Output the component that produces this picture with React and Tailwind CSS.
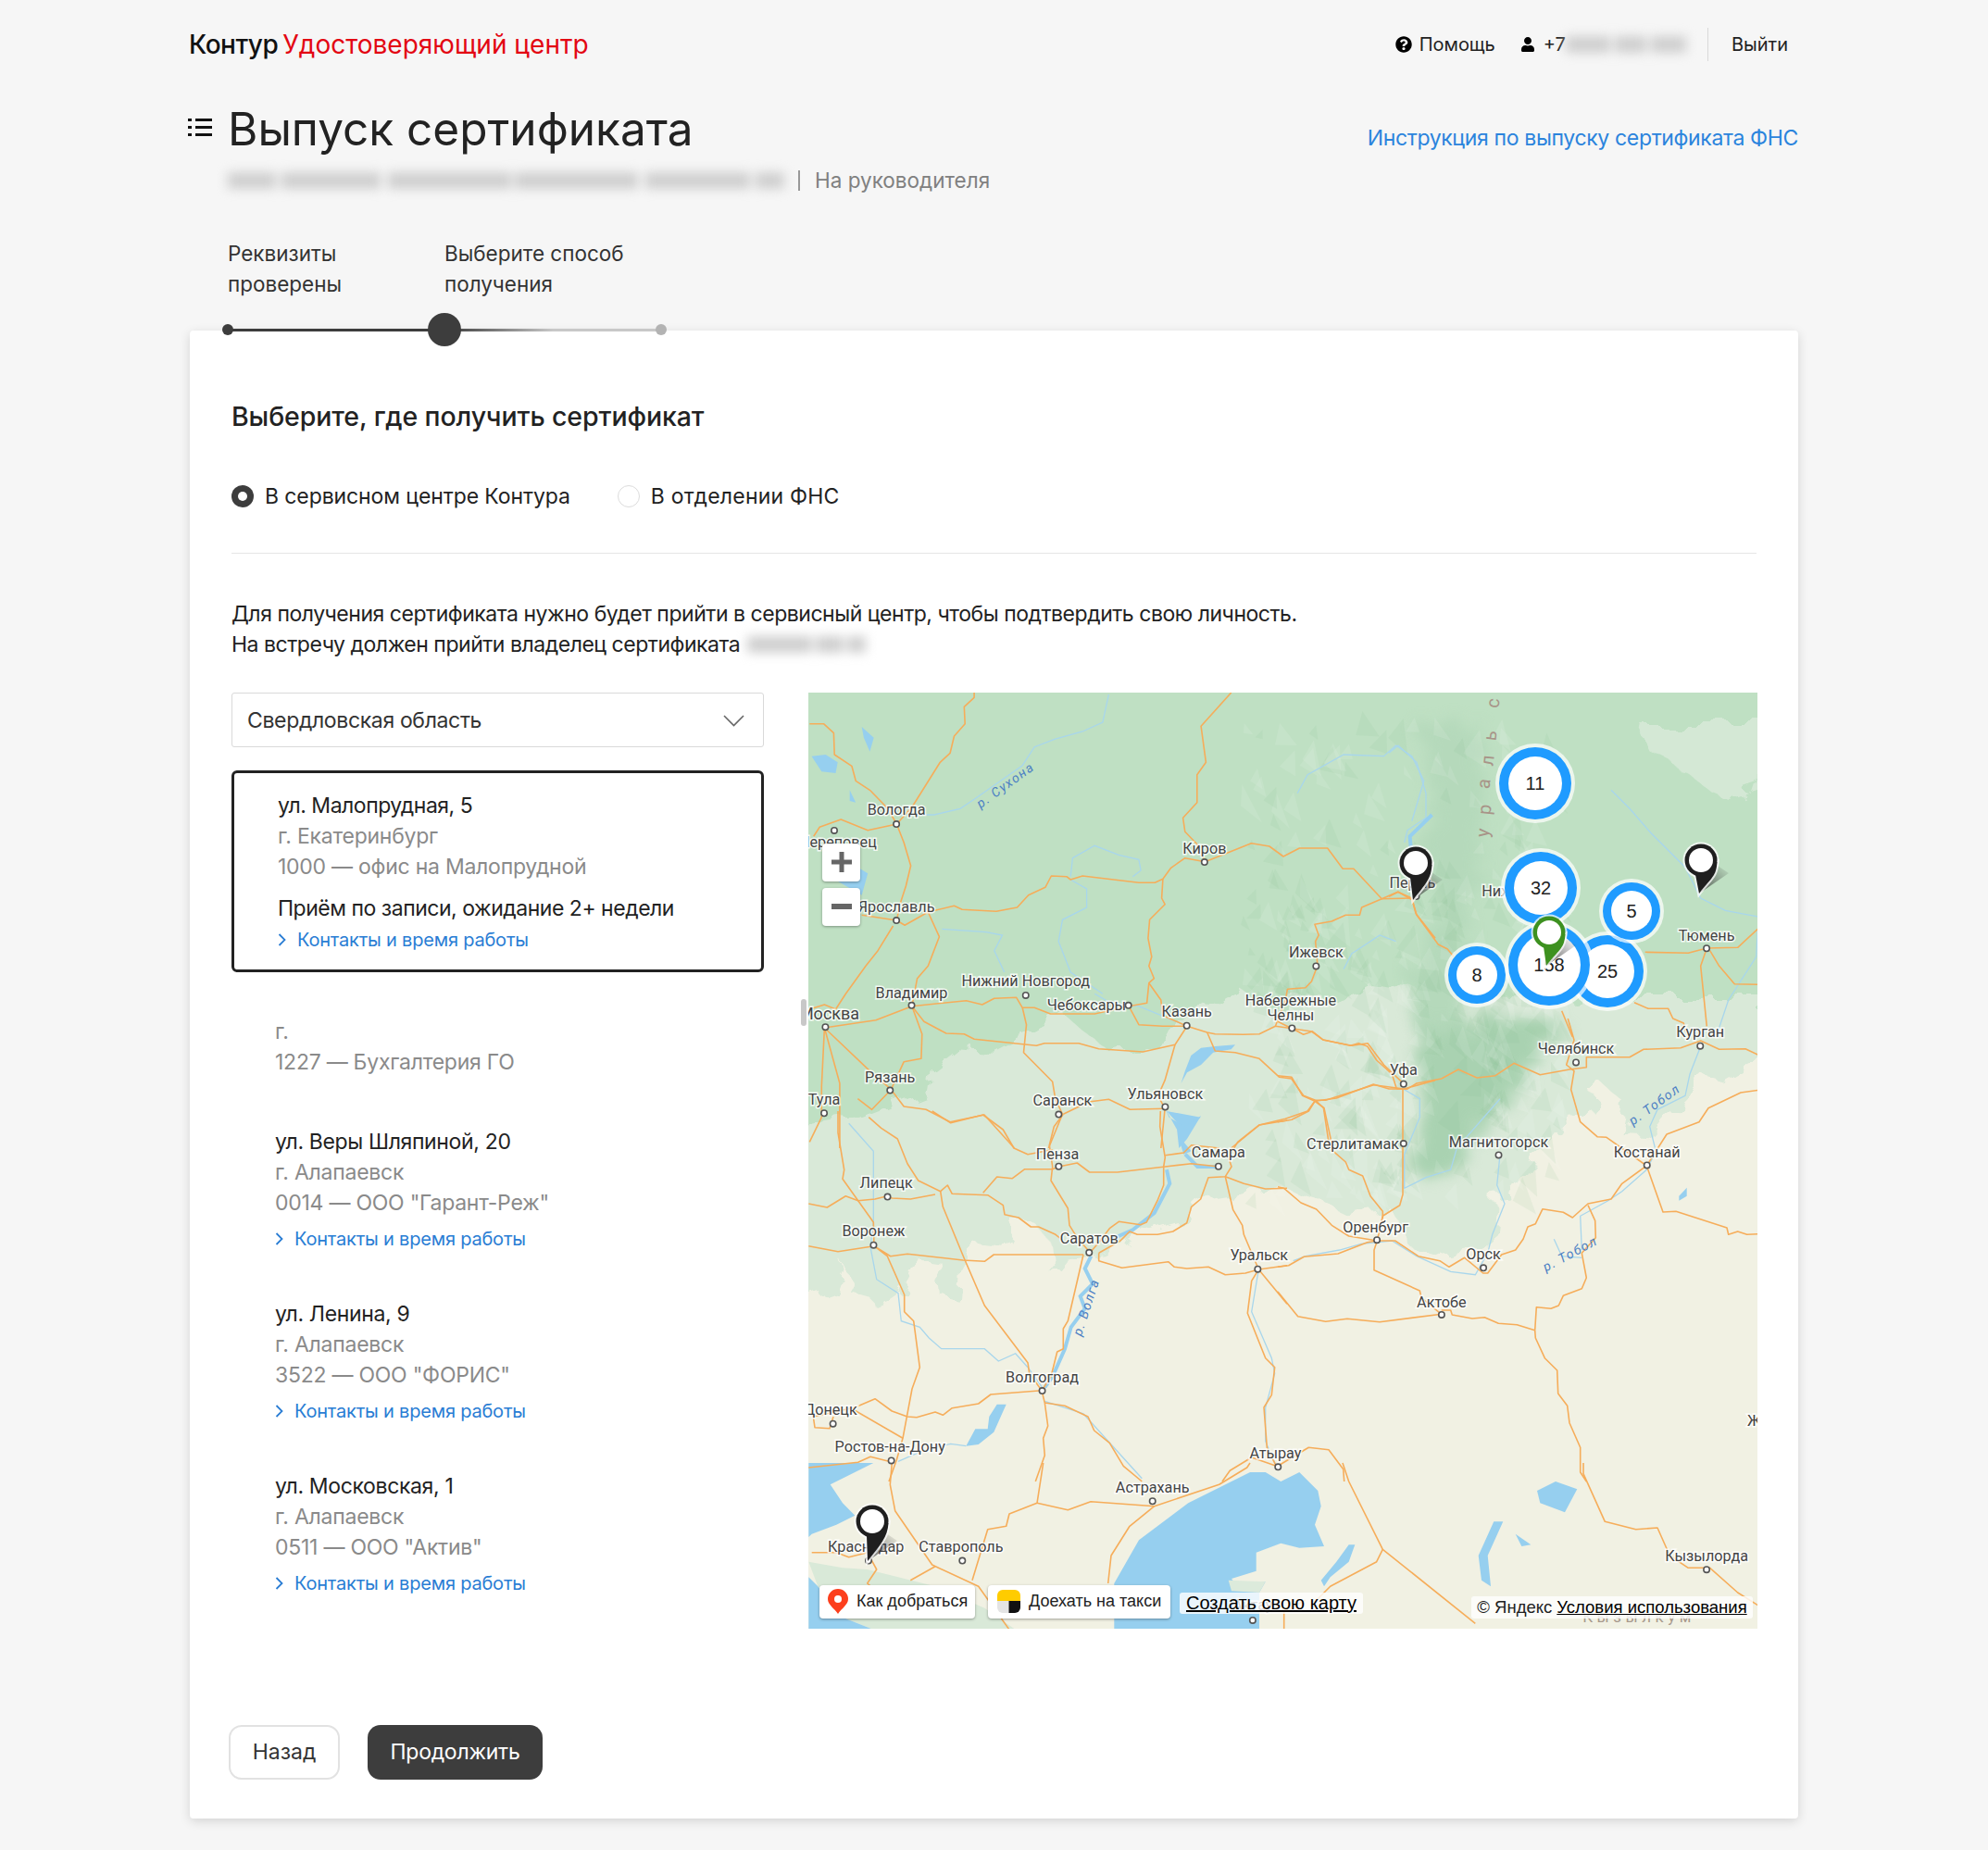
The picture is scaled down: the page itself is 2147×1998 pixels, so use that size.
import React from 'react';
import { FaQuestionCircle, FaUser } from 'react-icons/fa';

// zoom crops of the map -> page pixel coordinates
const z4 = (p) => p.map(([x, y]) => [870 + x / 2.306, 740 + y / 3]);
const z5 = (p) => p.map(([x, y]) => [1500 + x / 3, 780 + y / 3]);
const z6 = (p) => p.map(([x, y]) => [870 + x / 1.5, 1580 + y / 3]);
const z8 = (p) => p.map(([x, y]) => [870 + x / 3, 1200 + y / 3]);
const z9 = (p) => p.map(([x, y]) => [1380 + x / 3, 1100 + y / 3]);
const pts = (p) => p.map(([x, y]) => `${x.toFixed(1)},${y.toFixed(1)}`).join(' ');

const ROADS = [
  ...[
    [[10,125],[45,125],[70,155],[72,225],[115,262],[125,310],[160,340],[205,400],[227,450],[245,510],[262,585],[250,650],[235,710],[227,762]],
    [[227,450],[265,395],[335,250],[360,220],[370,165],[397,125],[395,70],[420,40],[420,24]],
    [[20,490],[35,460],[88,435],[155,470],[227,450]],
    [[140,745],[227,762],[247,778],[305,735],[370,715],[390,727],[475,733],[527,720],[555,680],[597,655],[612,618],[650,620],[660,630],[690,618],[830,640],[870,640],[890,628],[910,592],[945,560],[995,572],[1110,512],[1155,522],[1190,555],[1230,528],[1300,528],[1338,595],[1365,595],[1435,692],[1475,670],[1510,690]],
    [[1060,24],[985,133],[997,250],[975,290],[975,380],[940,430],[945,475],[975,515],[995,572]],
    [[890,628],[887,690],[895,710],[857,760],[853,820],[862,880],[855,910],[868,950],[855,965],[850,1030],[805,1040]],
    [[855,965],[885,1020],[890,1070],[950,1105]],
    [[10,1050],[47,1035],[75,1050]],
    [[47,1110],[175,1085],[265,1040],[400,1022],[440,1035],[470,1015],[525,1012],[540,1045],[570,1045],[610,1065],[720,1065],[805,1040],[830,1100],[890,1105],[950,1105],[1000,1125],[1020,1130],[1090,1132],[1130,1130],[1170,1105],[1212,1112],[1240,1132],[1262,1122],[1290,1150],[1360,1168],[1400,1160],[1440,1230],[1490,1292]],
    [[265,1040],[295,1090],[350,1128],[395,1130],[420,1147],[575,1168],[595,1160],[680,1160],[730,1178],[840,1188],[920,1165],[950,1105]],
    [[218,780],[180,860],[150,910],[100,1000],[75,1050]],
    [[305,735],[333,815],[305,910],[278,950],[265,1040]],
    [[265,1040],[290,1130],[288,1210],[245,1220],[213,1310],[165,1375],[130,1340]],
    [[47,1110],[160,1250],[213,1310],[245,1365],[300,1375],[360,1415],[445,1392],[520,1500]],
    [[47,1110],[40,1300],[40,1400],[10,1480]],
    [[47,1110],[85,1290],[85,1500]],
    [[540,1045],[550,1100],[543,1190],[615,1285],[622,1340],[640,1390],[605,1500]],
    [[642,1390],[705,1350],[755,1342],[808,1375],[895,1372]],
    [[920,1165],[895,1280],[878,1330],[895,1372],[885,1500]],
    [[1000,1125],[1020,1185],[1070,1190],[1130,1210],[1180,1270],[1210,1275],[1240,1330],[1270,1345],[1295,1345],[1415,1295],[1490,1308],[1568,1280]],
    [[1270,1345],[1290,1370],[1305,1500]],
    [[1270,1345],[1250,1380],[1195,1405],[1130,1425],[1060,1500]],
    [[1510,690],[1435,692],[1385,720],[1380,745],[1345,745],[1310,765],[1268,775],[1278,810],[1270,830],[1275,908],[1260,960],[1245,980],[1200,985],[1195,1020],[1170,1105]],
    [[1510,690],[1520,740],[1568,820]],
  ].map(z4),
  ...[
    [[410,0],[470,38],[575,12],[640,60],[675,120],[720,140],[800,125]],
    [[835,10],[805,50],[790,110],[800,180],[795,225],[850,315],[855,370],[880,410],[922,458]],
    [[205,20],[245,55],[298,90],[330,170],[365,225],[437,260],[460,240],[475,268],[590,272],[640,305],[645,335],[690,345],[730,375],[755,375],[810,400],[835,420]],
    [[437,260],[445,310],[515,480],[580,630],[720,815],[725,850],[765,905]],
    [[105,0],[105,70],[125,190],[120,220],[220,360],[222,437]],
    [[10,300],[70,312],[130,275],[170,290],[225,285],[265,275],[280,282],[340,285],[420,270]],
    [[10,437],[105,455],[222,437],[275,470],[330,463],[510,483],[580,487],[610,465],[900,465]],
    [[222,437],[265,470],[320,595],[320,650],[350,680],[370,830],[345,900],[315,1060],[295,1130],[270,1200]],
    [[900,465],[850,680],[835,705],[835,770],[815,780],[795,860],[765,905]],
    [[575,265],[620,213],[670,218],[710,188],[800,188],[820,180],[880,168],[920,198],[1010,198],[1165,180],[1250,170],[1340,180]],
    [[1150,0],[1148,50],[1165,150],[1160,180],[1160,240],[1140,290],[1105,360],[1085,368],[1015,358],[985,380],[950,425],[922,458]],
    [[1165,143],[1225,135],[1250,110],[1340,120]],
    [[950,460],[1020,420],[1050,390],[1075,400],[1140,400],[1190,390],[1235,362],[1250,310],[1280,285],[1305,215],[1360,212],[1380,180],[1370,150],[1400,100],[1470,45],[1560,30]],
    [[1360,212],[1420,235],[1490,252],[1560,250]],
    [[1360,212],[1385,320],[1415,370],[1420,400],[1468,513]],
    [[950,460],[950,485],[1025,508],[1175,488],[1195,505],[1235,510],[1305,505],[1360,530],[1425,525],[1468,513],[1560,500]],
    [[1468,513],[1560,625]],
    [[1468,513],[1445,550],[1432,655],[1490,800],[1520,830],[1510,920],[1485,960],[1495,1090],[1525,1150]],
    [[765,905],[600,918],[560,948],[475,962],[445,985],[420,975],[360,992],[330,990],[280,972],[225,932],[160,960],[25,990],[30,1025],[78,1028],[90,990]],
    [[160,970],[315,1060]],
    [[10,1155],[170,1138],[210,1120],[270,1135]],
    [[765,905],[775,945],[785,1020],[770,1060],[775,1115],[745,1200]],
    [[775,945],[840,955],[915,990],[935,1035],[985,1075],[1030,1150],[1090,1200]],
    [[1350,1200],[1375,1165],[1445,1122],[1525,1150]],
  ].map(z8),
  ...[
    [[0,10],[45,32],[110,42],[145,68],[235,88],[262,80],[290,90],[320,135],[370,180],[385,228]],
    [[385,228],[420,228],[450,210],[530,195],[585,165],[645,192],[705,185],[765,145],[850,182],[945,165],[1000,158],[1000,125],[1140,125],[1185,100],[1305,95],[1370,72],[1430,100],[1515,98],[1557,118]],
    [[0,185],[45,190],[80,250],[120,268],[190,258],[310,213],[360,228],[420,228]],
    [[120,268],[100,300],[45,328],[0,335]],
    [[120,268],[150,290],[180,430],[220,465],[230,490],[275,510],[300,575],[340,625],[340,650]],
    [[405,228],[405,400],[405,570],[395,605],[340,640],[322,720]],
    [[940,0],[960,70],[935,150],[960,170],[950,230],[980,335],[1035,383],[1065,385],[1195,477]],
    [[1195,477],[1260,375],[1365,335],[1395,290],[1500,240],[1557,232]],
    [[1195,477],[1248,627],[1290,625],[1455,678],[1460,700],[1490,690],[1520,700],[1557,698]],
    [[1195,477],[1115,535],[1080,585],[1005,600],[955,645],[925,628],[858,617],[835,665],[810,675],[795,715],[770,750],[725,765],[680,825],[665,825],[605,775],[555,805],[525,785],[455,770],[380,720],[322,720],[230,705],[175,670],[125,618],[75,597],[20,550],[0,545]],
    [[322,720],[290,725],[195,762],[85,772],[35,800],[0,805]],
    [[322,720],[312,750],[312,815],[460,882],[465,905],[530,958]],
    [[530,958],[330,983],[225,973],[155,982],[65,965],[0,885]],
    [[530,945],[560,945],[565,960],[630,972],[670,968],[715,988],[775,992],[833,1010]],
    [[833,1010],[838,935],[885,940],[910,930],[925,898],[985,875],[1000,840],[985,760],[1030,710],[1028,655],[1005,605]],
    [[833,1010],[835,1035],[865,1100],[905,1140],[908,1215],[938,1255],[945,1310],[980,1390],[980,1470],[1000,1500]],
    [[0,1450],[50,1420],[100,1390],[165,1397],[212,1460],[215,1500]],
  ].map(z9),
  ...[
    [[830,745],[970,748],[1030,732],[1130,730],[1195,670]],
    [[1030,732],[1010,790],[1030,985]],
    [[1040,740],[1070,790],[1120,848],[1195,850]],
    [[795,908],[840,928],[905,928],[920,960],[955,975],[960,1000]],
    [[560,935],[595,1020]],
    [[0,565],[30,550],[75,575],[90,625],[160,720],[190,735],[210,760]],
  ].map(z5),
  ...[
    [[140,0],[137,70],[145,155],[205,330],[280,400],[330,540]],
    [[10,290],[50,290],[70,305],[100,290],[115,345],[100,390],[130,440]],
    [[210,335],[170,380]],
    [[385,0],[375,130],[330,165],[325,205],[295,215],[270,380]],
    [[375,130],[425,152],[462,125],[565,140],[670,70],[715,15],[720,0]],
    [[565,140],[525,205],[495,300],[490,390]],
    [[870,0],[880,60],[935,280],[1085,520]],
    [[935,280],[925,320],[850,400],[825,450]],
    [[775,540],[775,480],[810,445]],
    [[1260,0],[1260,35],[1295,190],[1345,215],[1380,210],[1400,300],[1430,340],[1465,340],[1510,420],[1550,470]],
  ].map(z6),
];

const RIVERS = [
  ...[
    [[340,790],[450,800],[490,810],[470,860],[495,930]],
    [[720,1000],[760,1030],[830,1040],[950,1105]],
    [[230,420],[320,420],[385,400],[420,370],[540,260],[570,200],[620,175],[690,150],[740,120],[755,30]],
    [[660,620],[665,560],[720,520],[780,550],[830,565],[835,600],[815,620]],
    [[660,630],[700,660],[700,720],[640,760],[630,830],[660,930],[740,1000]],
    [[1225,350],[1250,290],[1340,225],[1440,230],[1470,195],[1510,230],[1540,310],[1510,440]],
    [[1340,920],[1360,870],[1430,810],[1470,830]],
  ].map(z4),
  ...[
    [[0,100],[30,75],[90,130],[120,230],[120,310],[60,350],[50,390]],
    [[720,220],[780,280],[850,360],[960,470],[1010,570],[1090,610],[1195,630]],
    [[1060,1020],[1100,900],[1190,760],[1195,670]],
  ].map(z5),
  ...[
    [[410,230],[460,260],[460,320],[410,440],[410,550],[480,515],[560,490],[580,420],[720,260]],
    [[720,440],[710,540],[735,600],[695,700],[680,760],[640,830],[560,820],[450,770],[370,720],[270,730],[200,750],[90,770],[50,785]],
    [[1370,90],[1335,180],[1320,250],[1230,295],[1205,350],[1225,430],[1195,490],[1115,560],[1070,590],[980,640],[985,750]],
    [[895,715],[920,770],[985,775]],
  ].map(z9),
  ...[
    [[140,40],[220,130],[220,360],[210,440],[230,545],[300,590],[310,680],[370,700],[400,735],[440,770],[580,770],[625,810],[680,785],[720,830],[770,900]],
    [[775,940],[900,980],[990,1080],[1090,1190]],
    [[1468,513],[1445,650],[1510,800],[1520,850],[1490,960],[1490,1070],[1525,1150]],
    [[520,1085],[470,1078],[380,1100],[300,1135]],
  ].map(z8),
];

const WIDE_RIVERS = [
  z8([[925,470],[905,510],[930,560],[890,600],[905,640],[860,700],[840,770],[800,860],[775,895]]),
  z8([[1170,190],[1180,235],[1130,330],[1060,385],[980,420]]),
  z8([[1230,140],[1270,180],[1340,180]]),
  z4([[1510,560],[1505,490],[1560,420]]),
];

const LAKES = [
  z6([[500,540],[500,390],[540,250],[620,130],[720,30],[745,30],[770,60],[800,30],[830,90],[835,140],[825,200],[840,270],[800,275],[770,260],[730,290],[730,350],[690,375],[700,400],[745,385],[735,420],[735,540]]),
  z6([[5,0],[110,0],[80,30],[40,70],[60,130],[80,170],[50,200],[10,230],[5,240]]),
  z6([[5,370],[20,400],[60,500],[110,540],[5,540]]),
  z6([[1115,190],[1130,190],[1105,300],[1110,400],[1095,380],[1090,300]]),
  z6([[1185,90],[1215,60],[1250,85],[1230,160],[1190,130]]),
  z6([[880,265],[890,265],[880,320],[850,370],[840,400],[835,380],[860,320]]),
  z6([[1150,230],[1175,265],[1160,270]]),
  z8([[620,950],[650,950],[610,1040],[560,1080],[520,1085],[550,1030],[590,1030],[595,990]]),
  z8([[1170,0],[1280,20],[1240,50],[1225,100],[1250,130],[1225,140],[1210,90],[1215,50]]),
  z4([[1020,1170],[1070,1165],[1060,1180],[1015,1190],[985,1230],[950,1255],[935,1290],[945,1250],[960,1200],[985,1175]]),
  z4([[895,1370],[905,1400],[945,1430],[985,1395],[950,1470],[930,1500],[925,1440]]),
  z4([[15,230],[50,225],[80,250],[75,285],[40,280]]),
  z4([[140,135],[170,170],[160,215],[145,170]]),
  z4([[110,340],[125,380],[110,375]]),
  z4([[130,590],[155,610],[140,680],[100,650],[80,635]]),
  z9([[1300,575],[1325,548],[1325,575],[1300,590]]),
];

const PALE = [
  [850, 1080], [850, 1403],
  ...z8([[10,610],[90,580],[120,490],[160,600],[250,625],[300,590],[360,470],[430,480],[440,520],[450,610],[500,620],[510,490],[560,430],[640,440],[680,365],[760,380],[790,430],[800,530],[840,480],[900,470],[960,460],[1100,390],[1240,350],[1300,290]]),
  ...z9([[20,550],[80,580],[150,600],[230,640],[370,620],[440,750],[540,780],[680,760],[700,570],[770,560],[830,480],[930,345],[985,340],[1040,260],[1010,240],[1050,210],[1140,290],[1120,380],[1200,385],[1300,265],[1380,190],[1450,210],[1557,150]]),
  [1920, 1140], [1920, 1040],
];

const FOREST = [
  [850, 730], [1920, 730], [1920, 1078], [1700, 1078],
  ...z4([[1568,1000],[1400,960],[1330,1010],[1210,1000],[1190,1040],[1130,1030],[1080,980],[1040,1010],[925,1120],[880,1150],[760,1190],[700,1130],[640,1060],[600,1100],[470,1190],[380,1180],[310,1250],[300,1330],[140,1410],[8,1440]]),
  [850, 1220],
];

const URAL = z9([[480,30],[610,0],[930,0],[870,120],[780,220],[720,300],[600,420],[570,500],[480,530],[440,480],[470,300],[440,80]]);
const URAL_NORTH = z5([[90,0],[300,0],[310,330],[260,650],[240,850],[230,1020],[100,1020],[60,820],[180,640],[110,420],[150,240]]);
const PATCH = z5([[810,0],[1220,0],[1220,210],[1100,250],[1050,230],[950,150],[850,100]]);

// low contrast triangles, the terrain texture of the tile set
const TERRAIN = [];
let seed = 17;
const rnd = () => { seed = (seed * 16807) % 2147483647; return seed / 2147483647; };
for (let i = 0; i < 420; i++) {
  const x = 1340 + rnd() * 340;
  const y = 960 + rnd() * 340 - (i % 3 === 0 ? 170 : 0);
  const s = 8 + rnd() * 18;
  TERRAIN.push({ p: [[x, y], [x + s, y + rnd() * s], [x + rnd() * s, y - s]], light: rnd() > 0.5 });
}

// label centre and dot, in the 1568 wide coordinates of the overview
const S = 1.3693;
const CITIES = [
  ['Вологда',707,639,707,650],['Череповец',661,664,658,655],['Ярославль',707,715,707,726],['Киров',950,669,950,680],
  ['Пермь',1114,696,1117,707],['Ижевск',1038,751,1038,762],['Нижний Новгород',809,774,809,785],['Владимир',719,783,719,793],
  ['Чебоксары',857,793,890,793],['Казань',936,798,936,809],['Набережные',1018,789,1019,811],['Челны',1018,801,null,null],
  ['Москва',654,800,651,810,18],['Рязань',702,850,702,860],['Тула',650,867,650,878],['Саранск',838,868,835,879],
  ['Ульяновск',919,863,919,873],['Уфа',1107,844,1107,855],['Пенза',834,910,835,920],['Самара',961,909,961,920],
  ['Стерлитамак',1067,902,1107,902],['Магнитогорск',1182,901,1182,911],['Липецк',699,933,700,944],['Воронеж',689,971,689,982],
  ['Саратов',859,977,859,988],['Оренбург',1085,968,1086,978],['Уральск',993,990,992,1001],['Орск',1170,989,1170,1000],
  ['Актобе',1137,1027,1137,1037],['Волгоград',822,1086,822,1097],['Донецк',655,1112,657,1123],['Ростов-на-Дону',702,1141,703,1152],
  ['Атырау',1006,1146,1008,1157],['Астрахань',909,1173,909,1184],['Краснодар',683,1220,685,1231],['Ставрополь',758,1220,759,1231],
  ['Актау',988,1266,988,1278],['Кызылорда',1346,1227,1346,1238],['Жезказган',1408,1121,null,null],['Челябинск',1243,827,1243,838],
  ['Курган',1341,814,1341,825],['Тюмень',1346,738,1346,748],['Костанай',1299,909,1299,919],['Нижний',1191,703,null,null],
];

const RIVER_NAMES = [
  ['р. Сухона', 795, 622, -36],
  ['р. Волга', 860, 1032, -72],
  ['р. Тобол', 1307, 874, -36],
  ['р. Тобол', 1240, 992, -28],
];

const URAL_LETTERS = [['у',1608,900],['р',1610,875],['а',1609,847],['л',1613,822],['ь',1616,795],['с',1619,760]];

const CLUSTERS = [
  [1658, 846, 39, 29, '11'],
  [1664, 959, 39, 29, '32'],
  [1595, 1053, 31, 22, '8'],
  [1736, 1049, 39, 29, '25'],
  [1762, 984, 31, 22, '5'],
  [1673, 1042, 44, 34, '158'],
];

function Pin({ x, y, tx, ty, color = '#1f1f1f' }) {
  const r = 17.5;
  const body = `M${x + r} ${y + 2} C${x + r - 1} ${y + r}, ${tx + 14} ${ty - 18}, ${tx} ${ty} L${x - 6} ${y + r - 2} Z`;
  return (
    <g>
      <polygon points={`${tx},${ty} ${tx + 32},${ty - 22} ${tx + 20},${ty - 30}`} fill="url(#pinShadow)" />
      <circle cx={x} cy={y} r={r + 2} fill="#fff" fillOpacity="0.75" />
      <path d={body} fill="#fff" fillOpacity="0.75" stroke="#fff" strokeOpacity="0.75" strokeWidth="4" />
      <circle cx={x} cy={y} r={r} fill={color} />
      <path d={body} fill={color} />
      <circle cx={x} cy={y} r={r - 4.5} fill="#fff" />
    </g>
  );
}

function MapTiles() {
  return (
    <svg viewBox="873 748 1025 1011" className="absolute inset-0 w-full h-full font-['Roboto']">
      <defs>
        <linearGradient id="pinShadow" x1="0" y1="1" x2="1" y2="0">
          <stop offset="0" stopColor="#333" stopOpacity="0.8" />
          <stop offset="1" stopColor="#333" stopOpacity="0" />
        </linearGradient>
        <filter id="rough" colorInterpolationFilters="sRGB" x="-5%" y="-5%" width="110%" height="110%">
          <feTurbulence type="fractalNoise" baseFrequency="0.035" numOctaves="3" seed="4" />
          <feDisplacementMap in="SourceGraphic" scale="34" />
        </filter>
        <filter id="soft" colorInterpolationFilters="sRGB" x="-20%" y="-20%" width="140%" height="140%">
          <feTurbulence type="fractalNoise" baseFrequency="0.05" numOctaves="3" seed="9" result="n" />
          <feDisplacementMap in="SourceGraphic" in2="n" scale="40" />
          <feGaussianBlur stdDeviation="7" />
        </filter>
      </defs>
      <rect x="873" y="748" width="1025" height="1011" fill="#f1f1e3" />
      <polygon points={pts(PALE)} fill="#d9e9d8" filter="url(#rough)" />
      <polygon points={pts(FOREST)} fill="#bfe0c3" filter="url(#rough)" />
      <polygon points={pts(PATCH)} fill="#d4e8d5" filter="url(#rough)" />
      <polygon points={pts(URAL_NORTH)} fill="#b5d9bb" filter="url(#soft)" />
      <polygon points={pts(URAL)} fill="#a9d2b1" filter="url(#soft)" />
      {TERRAIN.map((t, i) => (
        <polygon key={i} points={pts(t.p)} fill={t.light ? '#ffffff' : '#7fb98c'} fillOpacity="0.1" />
      ))}
      <polygon points={pts(z6([[5,320],[60,340],[100,345],[150,370],[210,400],[290,470],[340,540],[110,540],[60,500],[20,400]]))} fill="#d9e9d8" />
      {LAKES.map((p, i) => <polygon key={i} points={pts(p)} fill="#96cfef" />)}
      <polygon points={pts(z6([[685,380],[745,385],[735,420],[690,415]]))} fill="#dceadb" />
      {RIVERS.map((p, i) => <polyline key={i} points={pts(p)} fill="none" stroke="#a8d6ec" strokeWidth="1.3" />)}
      {WIDE_RIVERS.map((p, i) => <polyline key={i} points={pts(p)} fill="none" stroke="#96cfef" strokeWidth="4" />)}
      {ROADS.map((p, i) => <polyline key={i} points={pts(p)} fill="none" stroke="#f6ad5a" strokeWidth="1.6" strokeLinejoin="round" />)}

      {CITIES.map(([name, lx, ly, dx, dy, size = 16.2]) => (
        <g key={name}>
          <text x={lx * S} y={ly * S + 5.5} textAnchor="middle" fontSize={size} className="fill-[#444] stroke-white/80 stroke-[3px] [paint-order:stroke]">{name}</text>
          {dx !== null && <circle cx={dx * S} cy={dy * S} r="3.2" fill="#fff" stroke="#555" strokeWidth="1.6" />}
        </g>
      ))}
      {RIVER_NAMES.map(([name, x, y, a], i) => (
        <text key={i} transform={`translate(${x * S} ${y * S}) rotate(${a})`} textAnchor="middle" fontSize="14" fontStyle="italic" letterSpacing="1.5" className="fill-[#4c7fc4]">{name}</text>
      ))}
      <text x="1770" y="1752" textAnchor="middle" fontSize="17" letterSpacing="4.500" className="fill-[#a89a8c]">Кызылкум</text>
      {URAL_LETTERS.map(([c, x, y]) => (
        <text key={y} transform={`translate(${x} ${y}) rotate(-84)`} textAnchor="middle" fontSize="20" className="fill-[#a89488]">{c}</text>
      ))}

      <Pin x={1529} y={932} tx={1526} ty={972} />
      <Pin x={1837} y={929} tx={1835} ty={965} />
      <Pin x={942} y={1643} tx={937} ty={1686} />

      {CLUSTERS.map(([x, y, r, w, label]) => (
        <g key={label}>
          <circle cx={x} cy={y} r={r + 4} fill="#fff" fillOpacity="0.7" />
          <circle cx={x} cy={y} r={r} fill="#1f9bff" />
          <circle cx={x} cy={y} r={w} fill="#fff" />
          <text x={x} y={y + 7} textAnchor="middle" fontSize="20" className="font-['Liberation_Sans'] fill-[#222]">{label}</text>
        </g>
      ))}
      <Pin x={1673} y={1007} tx={1670} ty={1043} color="#3d9120" />
    </svg>
  );
}

function YandexMap() {
  return (
    <div className="relative w-[1025px] h-[1011px] flex-none overflow-hidden font-['Liberation_Sans']">
      <MapTiles />
      {/* zoom controls */}
      <div className="absolute left-[15px] top-[163px] flex flex-col gap-[7px]">
        <div className="w-[41px] h-[41px] bg-white rounded-[4px] shadow-[0_1px_3px_rgba(0,0,0,0.35)] flex items-center justify-center text-[#666]">
          <svg width="22" height="22" viewBox="0 0 22 22"><path d="M8.500 0h5v8.500H22v5h-8.500V22h-5v-8.500H0v-5h8.500z" fill="currentColor" /></svg>
        </div>
        <div className="w-[41px] h-[41px] bg-white rounded-[4px] shadow-[0_1px_3px_rgba(0,0,0,0.35)] flex items-center justify-center text-[#666]">
          <svg width="22" height="6" viewBox="0 0 22 6"><rect width="22" height="6" fill="currentColor" /></svg>
        </div>
      </div>
      {/* bottom controls */}
      <div className="absolute left-[12px] top-[964px] h-[36px] w-[168px] bg-white rounded-[4px] shadow-[0_1px_3px_rgba(0,0,0,0.35)] flex items-center pl-[8px] gap-[8px] text-[18px] text-[#222] whitespace-nowrap">
        <svg width="24" height="27" viewBox="0 0 24 27"><path d="M12 0a11 11 0 0 1 11 11c0 6-7 10-11 16C8 21 1 17 1 11A11 11 0 0 1 12 0z" fill="#fc3f1d" /><circle cx="12" cy="11" r="4" fill="#fff" /></svg>
        <span>Как добраться</span>
      </div>
      <div className="absolute left-[194px] top-[964px] h-[36px] w-[197px] bg-white rounded-[4px] shadow-[0_1px_3px_rgba(0,0,0,0.35)] flex items-center pl-[10px] gap-[9px] text-[18px] text-[#222] whitespace-nowrap">
        <svg width="25" height="25" viewBox="0 0 25 25" className="flex-none"><path d="M0 6a6 6 0 0 1 6-6h13a6 6 0 0 1 6 6v6H0z" fill="#fc0" /><path d="M0 12h12.500v13H6a6 6 0 0 1-6-6z" fill="#e4e4e4" /><path d="M12.500 12H25v7a6 6 0 0 1-6 6h-6.500z" fill="#111" /></svg>
        <span>Доехать на такси</span>
      </div>
      <div className="absolute left-[401px] top-[972px] h-[23px] w-[198px] bg-white/80 rounded-[3px] flex items-center justify-center text-[20px] text-black underline whitespace-nowrap">Создать свою карту</div>
      <div className="absolute left-[716px] top-[976px] h-[24px] w-[304px] bg-white/80 rounded-[3px] flex items-center justify-center gap-[5px] text-[18.500px] text-[#222] whitespace-nowrap">
        <span>© Яндекс</span><span className="underline text-black">Условия использования</span>
      </div>
    </div>
  );
}

function Contacts({ className = '' }) {
  return (
    <div className={`flex items-center text-[20px] tracking-[-0.2px] leading-[33px] text-[#2a7dd4] ${className}`}>
      <svg width="9" height="14" viewBox="0 0 9 14" className="flex-none">
        <path d="M1.500 1l6 6-6 6" fill="none" stroke="currentColor" strokeWidth="1.800" />
      </svg>
      <span className="ml-[12px]">Контакты и время работы</span>
    </div>
  );
}

function Office({ street, city, name }) {
  return (
    <div className="mt-[48px] ml-[47px] text-[23px] tracking-[-0.25px] leading-[33px]">
      {street && <div className="text-[#222] tracking-[-0.35px]">{street}</div>}
      <div className="text-[#8a8a8a]">{city}</div>
      <div className="text-[#8a8a8a]">{name}</div>
      {street ? <Contacts className="mt-[6px]" /> : <div className="h-[5px]" />}
    </div>
  );
}

// a censored string in the screenshot
function Blurred({ bars, className = '' }) {
  return (
    <div className={`flex items-center blur-[6px] ${className}`}>
      {bars.map(([w, gap], i) => (
        <div key={i} className="h-[18px] bg-[#cfcfcf]" style={{ width: w, marginRight: gap }} />
      ))}
    </div>
  );
}

export default function App() {
  return (
    <div className="min-h-screen bg-[#f6f6f6] pb-[34px] font-['Inter',sans-serif] text-[#222]">
      <div className="mx-[205px]">
        {/* Header */}
        <header className="h-[94px] pt-[2px] flex items-center justify-between">
          <div className="flex items-baseline gap-[5px] text-[28px] -ml-[1px]">
            <span className="text-[#111] font-medium tracking-[-0.5px]">Контур</span>
            <span className="text-[#e30613]">Удостоверяющий центр</span>
          </div>
          <div className="flex items-center text-[20px] text-[#222] mr-[11px]">
            <FaQuestionCircle className="w-[18px] h-[18px] text-black" />
            <span className="ml-[8px]">Помощь</span>
            <FaUser className="ml-[27px] w-[16px] h-[16px] text-black" />
            <span className="ml-[9px]">+7</span>
            <Blurred bars={[[48, 5], [34, 5], [38, 0]]} />
            <div className="ml-[23px] w-px h-[36px] bg-[#d9d9d9]" />
            <span className="ml-[25px]">Выйти</span>
          </div>
        </header>

        {/* Title */}
        <div className="flex justify-between mt-[15px]">
          <div className="flex">
            <svg width="26" height="20" viewBox="0 0 26 20" className="-ml-[2px] mt-[19px] flex-none text-[#111]">
              <path d="M0 0h4v3H0zM8 0h18v3H8zM0 8h4v3H0zM8 8h18v3H8zM0 16h4v3H0zM8 16h18v3H8z" fill="currentColor" />
            </svg>
            <h1 className="ml-[17px] text-[49.500px] leading-[60px] font-normal">Выпуск сертификата</h1>
          </div>
          <a className="mt-[24px] text-[23px] tracking-[-0.35px] leading-[33px] text-[#2b84dd]">Инструкция по выпуску сертификата ФНС</a>
        </div>
        <div className="flex items-center mt-[9px] ml-[41px] h-[33px] text-[22.500px] text-[#808080]">
          <Blurred bars={[[52, 6], [108, 8], [134, 4], [134, 8], [114, 6], [31, 0]]} className="w-[601px]" />
          <div className="ml-[15px] w-[2px] h-[22px] bg-[#999]" />
          <span className="ml-[16px]">На руководителя</span>
        </div>

        {/* Steps */}
        <div className="flex mt-[46px] ml-[41px] text-[22.500px] leading-[33px] text-[#333]">
          <div className="w-[234px]">Реквизиты<br />проверены</div>
          <div>Выберите способ<br />получения</div>
        </div>
        <div className="relative h-[33.500px] z-10">
          <div className="absolute left-[41px] top-[32px] w-[234px] h-[3px] bg-[#3d3d3d]" />
          <div className="absolute left-[275px] top-[32px] w-[234px] h-[3px] bg-gradient-to-r from-[#3d3d3d] to-[#c8c8c8] to-50%" />
          <div className="absolute left-[35px] top-[27px] w-[12px] h-[12px] rounded-full bg-[#3d3d3d]" />
          <div className="absolute left-[257px] top-[15px] w-[36px] h-[36px] rounded-full bg-[#3d3d3d]" />
          <div className="absolute left-[503px] top-[27px] w-[12px] h-[12px] rounded-full bg-[#b3b3b3]" />
        </div>

        {/* Card */}
        <main className="bg-white rounded-[4px] shadow-[0_3px_12px_rgba(0,0,0,0.14)] px-[45px] pt-[73px] h-[1607px]">
          <h2 className="text-[28.500px] tracking-[-0.1px] leading-[40px] font-medium">Выберите, где получить сертификат</h2>

          <div className="flex items-center mt-[50px] h-[33px] text-[23px] tracking-[-0.1px]">
            <div className="w-[24px] h-[24px] rounded-full bg-[#3d3d3d] flex items-center justify-center">
              <div className="w-[10px] h-[10px] rounded-full bg-white" />
            </div>
            <span className="ml-[12px]">В сервисном центре Контура</span>
            <div className="ml-[51px] w-[24px] h-[24px] rounded-full border border-[#dcdcdc] bg-white" />
            <span className="ml-[12px] tracking-[0.2px]">В отделении ФНС</span>
          </div>

          <div className="mt-[44px] h-px bg-[#e6e6e6]" />

          <div className="mt-[49px] text-[23px] tracking-[-0.47px] leading-[33px]">
            <div>Для получения сертификата нужно будет прийти в сервисный центр, чтобы подтвердить свою личность.</div>
            <div className="flex items-center">
              На встречу должен прийти владелец сертификата
              <Blurred bars={[[70, 4], [30, 4], [20, 0]]} className="ml-[8px]" />
            </div>
          </div>

          <div className="flex gap-[48px] mt-[35px]">
            <div className="relative w-[575px] flex-none">
              <div className="h-[59px] border border-[#d9d9d9] rounded-[3px] flex items-center justify-between pl-[16px] pr-[20px] pt-[2px] text-[23px] tracking-[-0.35px]">
                <span className="text-[#333]">Свердловская область</span>
                <svg width="23" height="13" viewBox="0 0 23 13" className="text-[#666]">
                  <path d="M1 1l10.500 10.500L22 1" fill="none" stroke="currentColor" strokeWidth="1.600" />
                </svg>
              </div>

              <div className="mt-[25px] h-[218px] border-[3px] border-[#222] rounded-[6px] pl-[47px] pt-[19px] text-[23px] tracking-[-0.25px] leading-[33px]">
                <div className="tracking-[-0.47px]">ул. Малопрудная, 5</div>
                <div className="text-[#8a8a8a]">г. Екатеринбург</div>
                <div className="text-[#8a8a8a]">1000 — офис на Малопрудной</div>
                <div className="mt-[12px] tracking-[-0.48px]">Приём по записи, ожидание 2+ недели</div>
                <Contacts className="mt-[1px]" />
              </div>

              <Office city="г." name="1227 — Бухгалтерия ГО" />
              <Office street="ул. Веры Шляпиной, 20" city="г. Алапаевск" name={'0014 — ООО "Гарант-Реж"'} />
              <Office street="ул. Ленина, 9" city="г. Алапаевск" name={'3522 — ООО "ФОРИС"'} />
              <Office street="ул. Московская, 1" city="г. Алапаевск" name={'0511 — ООО "Актив"'} />

              <div className="absolute left-[615px] top-[331px] w-[6px] h-[29px] rounded-[3px] bg-[#c8c8c8]" />
            </div>
            <YandexMap />
          </div>

          {/* Buttons */}
          <div className="flex gap-[30px] mt-[104px] -ml-[3px] text-[23px]">
            <button className="w-[120px] h-[59px] bg-white border-2 border-[#e2e2e2] rounded-[14px] text-[#333]">Назад</button>
            <button className="w-[189px] h-[59px] bg-[#3d3d3d] rounded-[14px] text-white tracking-[-0.25px]">Продолжить</button>
          </div>
        </main>
      </div>
    </div>
  );
}
